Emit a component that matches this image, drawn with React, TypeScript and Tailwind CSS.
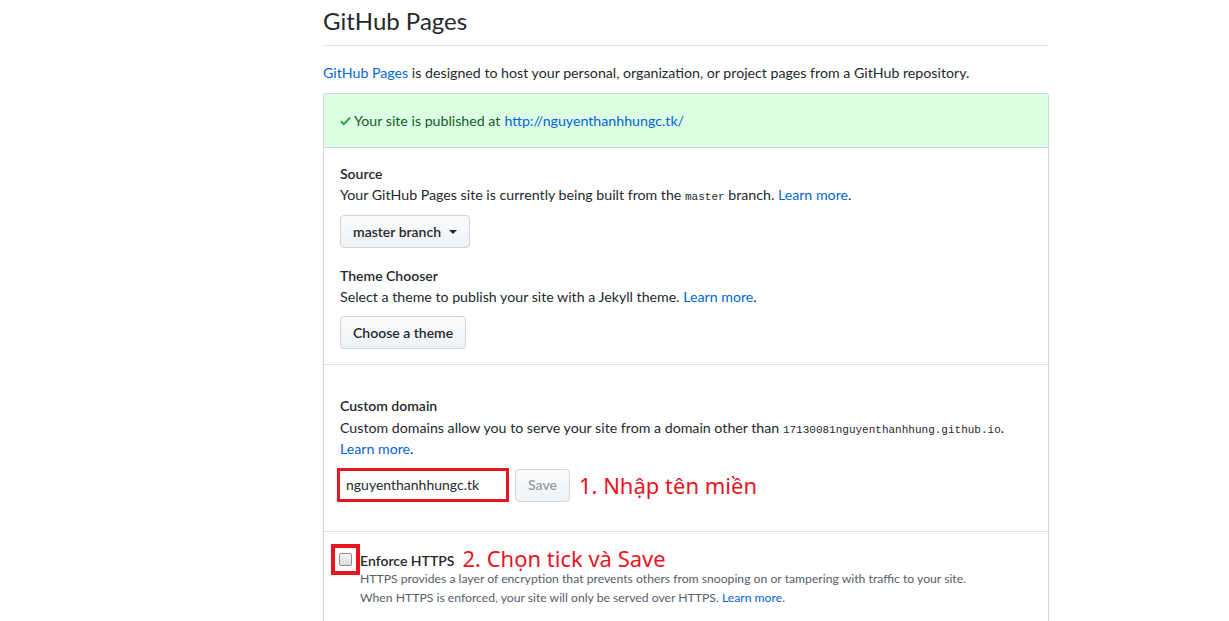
const sans = { fontFamily: 'Lato, "Noto Sans", Arial, sans-serif' };
const mono = { fontFamily: '"Liberation Mono", "DejaVu Sans Mono", monospace' };
const note = { fontFamily: '"Noto Sans", sans-serif' };

function Btn({ children, disabled }: { children: React.ReactNode; disabled?: boolean }) {
  return (
    <button
      className={`h-[33px] px-3 rounded-[4px] border border-[#d1d5da] bg-gradient-to-b from-[#fafbfc] to-[#eff3f6] text-sm font-semibold ${
        disabled ? 'text-[#959da5]' : 'text-[#24292e]'
      }`}
    >
      {children}
    </button>
  );
}

export default function App() {
  return (
    <div className="min-h-screen bg-white text-[#24292e] overflow-hidden" style={sans}>
      <div className="ml-[323px] w-[726px]">
        <h1 className="text-[24px] leading-[30px] pt-[6px] pb-[9px] border-b border-[#e1e4e8]">GitHub Pages</h1>
        <p className="text-[14.2px] mt-[16px] mb-[10px]">
          <a className="text-[#0366d6]">GitHub Pages</a> is designed to host your personal, organization, or project pages from a GitHub repository.
        </p>

        <div className="border border-[#d1d5da] rounded-t-[3px] border-b-0">
          <div className="bg-[#dcffe4] border-b border-[#d1d5da] px-4 h-[54px] flex items-center text-[14.2px] text-[#165c26]">
            <svg viewBox="0 0 12 16" className="w-[11px] h-[14px] mr-[3px] fill-[#28a745]">
              <path d="M12 5l-8 8-4-4 1.5-1.5L4 10l6.5-6.5L12 5z" />
            </svg>
            Your site is published at <a className="text-[#0366d6] ml-1">http://nguyenthanhhungc.tk/</a>
          </div>

          <div className="px-4 pt-[16px] pb-[15px] border-b border-[#e1e4e8]">
            <div className="text-sm font-semibold leading-5">Source</div>
            <p className="text-[14.2px] leading-5 mt-[1px]">
              Your GitHub Pages site is currently being built from the{' '}
              <code className="text-[11px] leading-none" style={mono}>master</code> branch.{' '}
              <a className="text-[#0366d6]">Learn more</a>.
            </p>
            <div className="mt-[10px] flex">
              <Btn>
                <span className="flex items-center gap-2">
                  master branch
                  <span className="w-0 h-0 border-l-4 border-r-4 border-t-4 border-l-transparent border-r-transparent border-t-[#24292e]" />
                </span>
              </Btn>
            </div>

            <div className="text-sm font-semibold leading-5 mt-[18px]">Theme Chooser</div>
            <p className="text-[14.2px] leading-5 mt-[1px]">
              Select a theme to publish your site with a Jekyll theme. <a className="text-[#0366d6]">Learn more</a>.
            </p>
            <div className="mt-[9px] flex">
              <Btn>Choose a theme</Btn>
            </div>
          </div>

          <div className="px-4 pt-[31px] pb-[29px] border-b border-[#e1e4e8]">
            <div className="text-sm font-semibold leading-5">Custom domain</div>
            <p className="text-[14.2px] leading-[21px] mt-[1px]">
              Custom domains allow you to serve your site from a domain other than{' '}
              <code className="text-[11px] leading-none" style={mono}>17130081nguyenthanhhung.github.io</code>.
              <br />
              <a className="text-[#0366d6]">Learn more</a>.
            </p>
            <div className="mt-[9px] flex items-center">
              <div className="w-[172px] h-[34px] border-[3px] border-[#e8141f] -ml-[3px] flex items-center pl-[6px] text-sm">
                nguyenthanhhungc.tk
              </div>
              <div className="ml-[6px] flex">
                <Btn disabled>Save</Btn>
              </div>
              <span className="ml-[9px] text-[22px] text-[#e8141f]" style={note}>
                1. Nhập tên miền
              </span>
            </div>
          </div>

          <div className="pt-[12px] pb-6">
            <div className="flex items-start">
              <div className="ml-[7px] w-[29px] h-[31px] border-[4px] border-[#e8141f] flex items-center justify-center">
                <div className="w-[13px] h-[13px] border border-[#8f8f8f] rounded-[2px] bg-gradient-to-b from-[#f4f4f4] to-[#dcdcdc]" />
              </div>
              <div>
                <div className="flex items-center h-[31px]">
                  <span className="text-sm font-semibold mt-[2px]">Enforce HTTPS</span>
                  <span className="ml-2 text-[22px] text-[#e8141f] -mt-[2px]" style={note}>
                    2. Chọn tick và Save
                  </span>
                </div>
                <p className="text-[12.2px] leading-[19px] text-[#586069] -mt-[6px]">
                  HTTPS provides a layer of encryption that prevents others from snooping on or tampering with traffic to your site.
                  <br />
                  When HTTPS is enforced, your site will only be served over HTTPS. <a className="text-[#0366d6]">Learn more</a>.
                </p>
              </div>
            </div>
          </div>
        </div>
      </div>
    </div>
  );
}
